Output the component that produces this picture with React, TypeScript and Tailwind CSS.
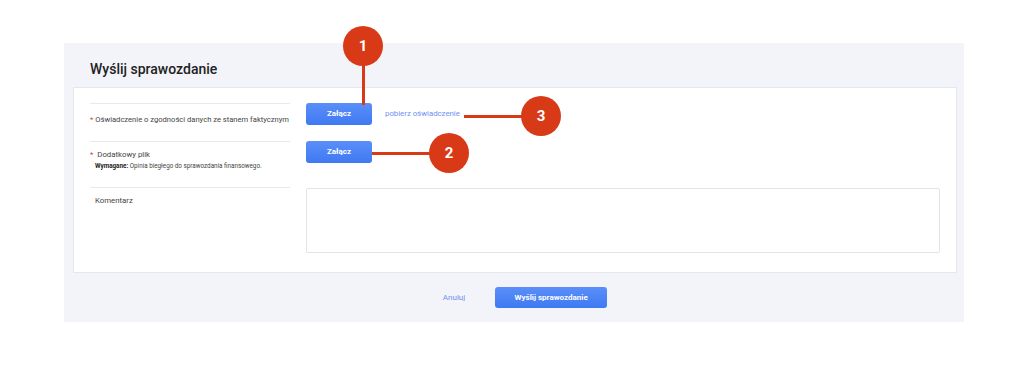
import React from 'react';

const font = { fontFamily: 'Roboto, "Noto Sans", sans-serif' };

function Marker({ n, className }: { n: number; className: string }) {
  return (
    <div
      className={`absolute flex h-[40px] w-[40px] items-center justify-center rounded-full bg-[#d83a17] text-[15px] font-bold text-white ${className}`}
    >
      {n}
    </div>
  );
}

function AttachButton() {
  return (
    <button
      type="button"
      className="block h-[22px] w-[66px] rounded-[3px] bg-gradient-to-b from-[#5a8ff9] to-[#3f79f2] text-[8px] font-bold text-white"
    >
      Załącz
    </button>
  );
}

export default function App() {
  return (
    <div className="relative h-[370px] w-[1024px] overflow-hidden bg-white text-[#444]" style={font}>
      <div className="ml-[64px] mt-[43px] w-[900px] bg-[#f3f4f9]">
        {/* Header */}
        <div className="flex h-[44px] items-end pb-[9px] pl-[26px]">
          <h1 className="text-[14px] font-medium leading-[18px] text-[#222]">Wyślij sprawozdanie</h1>
        </div>

        {/* Form card */}
        <div className="mx-[9px] w-[884px] border border-[#e6e7ee] bg-white px-[16px] pb-[17px] pt-[15px]">
          <div className="flex h-[38px] items-start">
            <div className="flex h-[38px] w-[200px] items-center whitespace-nowrap border-t border-[#e8e9ef] pb-[5px] text-[7.6px] leading-[10px]">
              <span className="mr-[2px] text-[#d04a3a]">*</span> Oświadczenie o zgodności danych ze stanem faktycznym
            </div>
            <div className="ml-[16px] flex items-center gap-[13px]">
              <AttachButton />
              <a className="text-[7.8px] leading-[10px] text-[#6f8ff4]">pobierz oświadczenie</a>
            </div>
          </div>

          <div className="flex h-[46px] items-start">
            <div className="h-[46px] w-[200px] whitespace-nowrap border-t border-[#e8e9ef] pt-[8px] text-[7.8px] leading-[10px]">
              <div>
                <span className="mr-[2px] text-[#d04a3a]">*</span> Dodatkowy plik
              </div>
              <div className="mt-[2px] pl-[5px] text-[6.3px] leading-[8px] text-[#444]">
                <span className="font-bold text-[#222]">Wymagane:</span> Opinia biegłego do sprawozdania finansowego.
              </div>
            </div>
            <div className="ml-[16px]">
              <AttachButton />
            </div>
          </div>

          <div className="flex h-[68px] items-start">
            <div className="h-[68px] w-[200px] border-t border-[#e8e9ef] pl-[5px] pt-[8px] text-[7.8px] leading-[10px]">
              Komentarz
            </div>
            <textarea className="ml-[16px] mt-px block h-[65px] w-[634px] resize-none rounded-[2px] border border-[#e3e4ea] outline-none" />
          </div>
        </div>

        {/* Footer */}
        <div className="flex h-[49px] items-center justify-center gap-[30px] pl-[22px]">
          <a className="text-[8px] text-[#6f8ff4]">Anuluj</a>
          <button
            type="button"
            className="block h-[21px] w-[112px] rounded-[3px] bg-gradient-to-b from-[#5a8ff9] to-[#3f79f2] text-[8px] font-bold text-white"
          >
            Wyślij sprawozdanie
          </button>
        </div>
      </div>

      {/* Annotations */}
      <div className="absolute left-[362px] top-[60px] h-[45px] w-[3px] bg-[#d83a17]" />
      <Marker n={1} className="left-[343px] top-[26px]" />
      <div className="absolute left-[372px] top-[152px] h-[3px] w-[60px] bg-[#d83a17]" />
      <Marker n={2} className="left-[429px] top-[133px]" />
      <div className="absolute left-[464px] top-[115px] h-[3px] w-[60px] bg-[#d83a17]" />
      <Marker n={3} className="left-[521px] top-[96px]" />
    </div>
  );
}
